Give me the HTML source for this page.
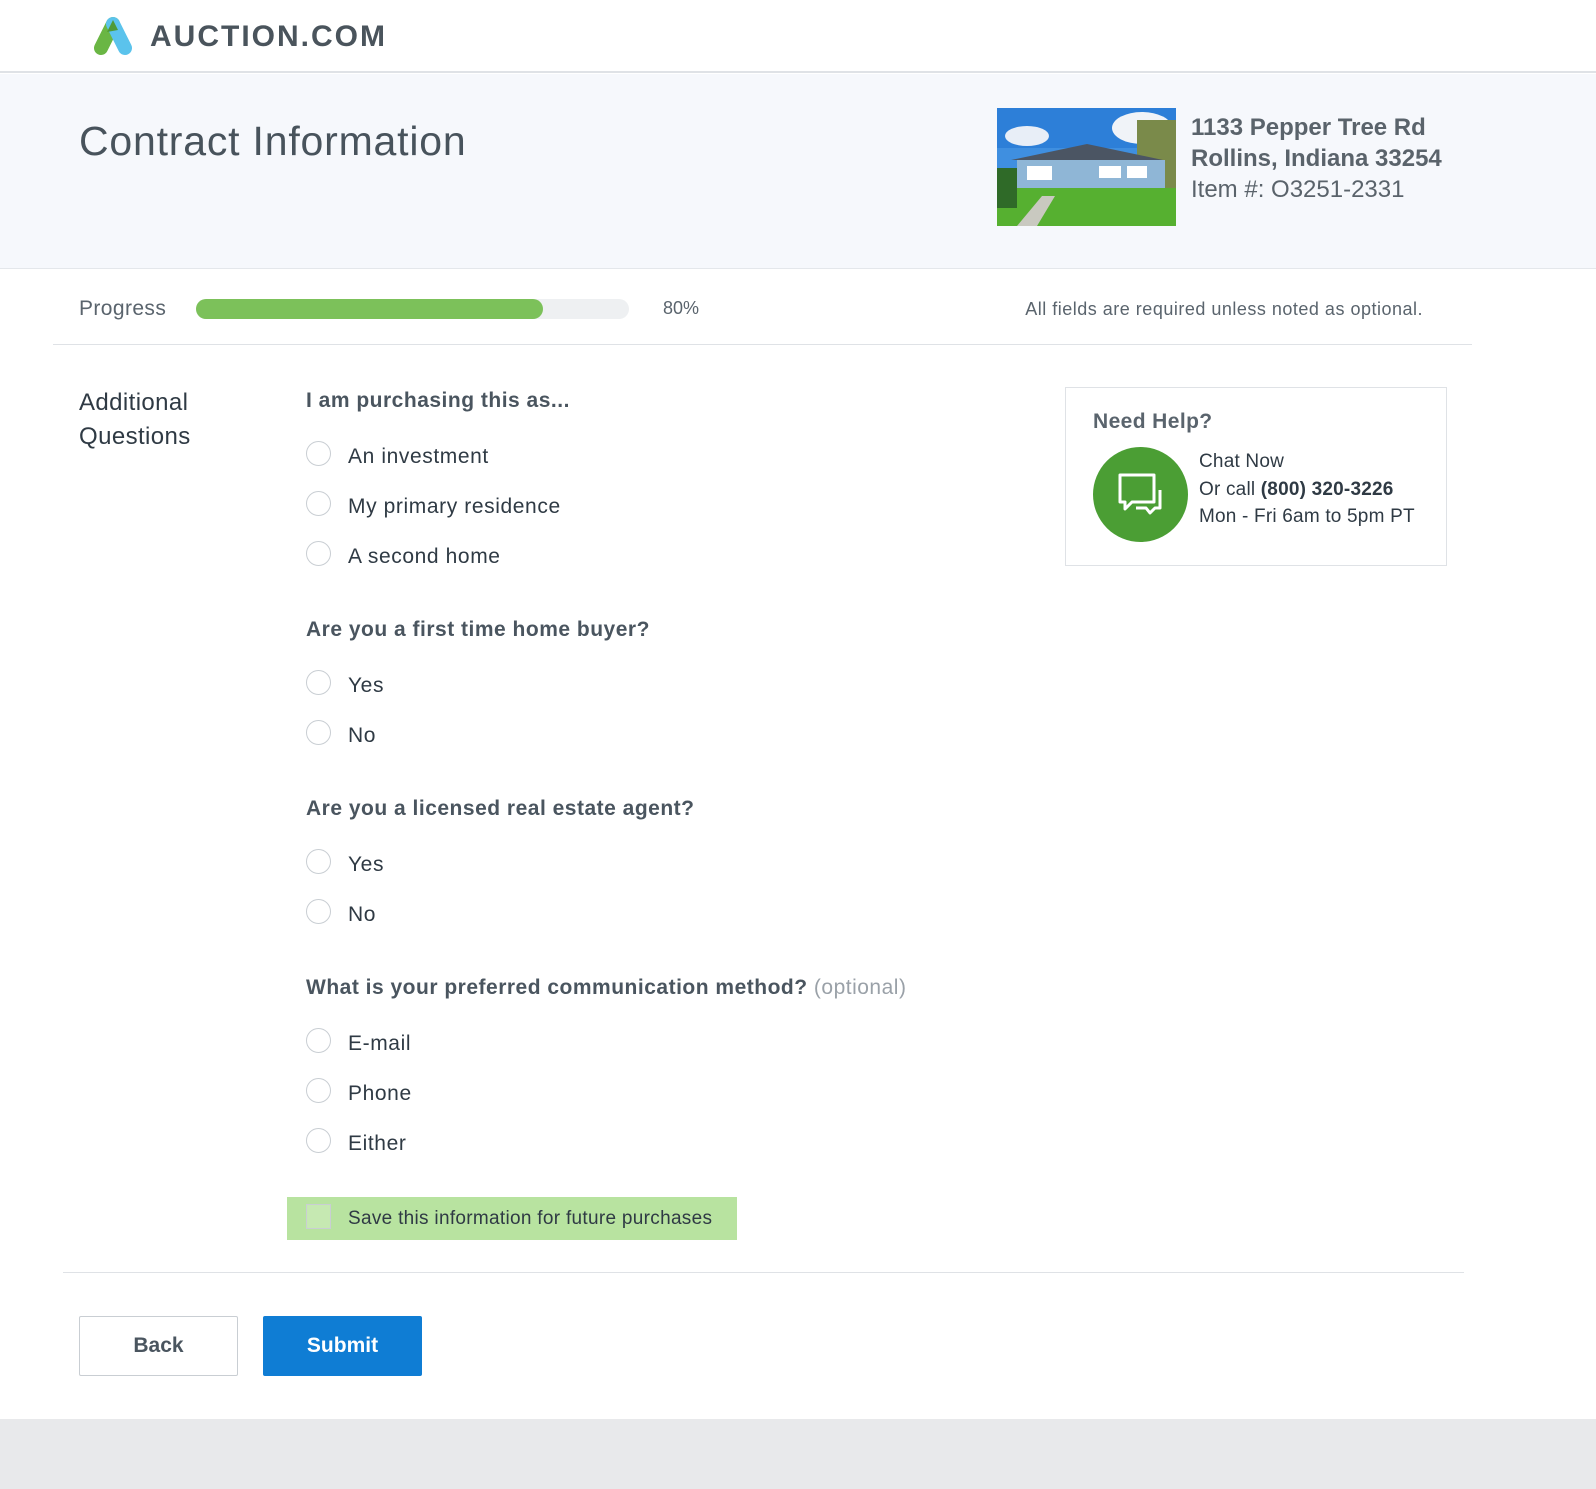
<!DOCTYPE html>
<html><head><meta charset="utf-8"><style>
*{margin:0;padding:0;box-sizing:border-box}
body{width:1596px;height:1489px;position:relative;font-family:"Liberation Sans",sans-serif;color:#3b4650;background:#fff;overflow:hidden}
.a{position:absolute;white-space:nowrap}
.r{position:absolute;width:25px;height:25px;border:1px solid #c9ced3;border-radius:50%;background:#fff;left:306px}
.o{position:absolute;left:348px;font-size:21px;color:#2f3a44;line-height:26px;letter-spacing:0.6px}
.q{position:absolute;left:306px;font-size:21px;font-weight:bold;color:#4a555f;line-height:26px;letter-spacing:0.5px}
</style></head><body>
<div class="a" style="left:0;top:0;width:1596px;height:73px;border-bottom:2px solid #dfe2e6"></div>
<svg class="a" style="left:88px;top:14px" width="50" height="44" viewBox="0 0 50 44">
<line x1="13" y1="34" x2="25" y2="10" stroke="#6ab644" stroke-width="14" stroke-linecap="round"/>
<line x1="25" y1="10" x2="37" y2="34" stroke="#5bc3ec" stroke-width="14" stroke-linecap="round"/>
<path d="M19 18 L25 6 L30 16 Z" fill="#4f9a36"/>
</svg>
<div class="a" style="left:150px;top:20px;font-size:30px;font-weight:bold;letter-spacing:2px;color:#4a545c;line-height:34px">AUCTION.COM</div>
<div class="a" style="left:0;top:74px;width:1596px;height:195px;background:#f6f8fc;border-bottom:1px solid #e4e7eb"></div>
<div class="a" style="left:79px;top:117px;font-size:41px;color:#48535c;line-height:48px;letter-spacing:0.8px">Contract Information</div>
<svg class="a" style="left:997px;top:108px" width="179" height="118" viewBox="0 0 179 118">
<rect width="179" height="118" fill="#3f8fe0"/><rect y="0" width="179" height="40" fill="#2d7fd8"/>
<ellipse cx="30" cy="28" rx="22" ry="10" fill="#e8eef7"/><ellipse cx="145" cy="20" rx="30" ry="16" fill="#f0f3f8"/>
<rect x="140" y="12" width="39" height="80" fill="#7a8a4a"/>
<polygon points="14,52 90,36 166,52" fill="#4b5563"/>
<rect x="20" y="52" width="148" height="40" fill="#8fb6d6"/>
<rect x="30" y="58" width="25" height="14" fill="#fff"/><rect x="102" y="58" width="22" height="12" fill="#fff"/><rect x="130" y="58" width="20" height="12" fill="#fff"/>
<rect x="0" y="80" width="179" height="38" fill="#56b030"/><polygon points="20,118 45,88 58,88 40,118" fill="#c9c9c0"/>
<rect x="0" y="60" width="20" height="40" fill="#2f6a28"/>
</svg>
<div class="a" style="left:1191px;top:112px;font-size:24px;line-height:31px;color:#5a636b"><b>1133 Pepper Tree Rd</b><br><b>Rollins, Indiana 33254</b><br>Item #: O3251-2331</div>
<div class="a" style="left:79px;top:297px;font-size:21px;color:#5a646d;letter-spacing:0.4px">Progress</div>
<div class="a" style="left:196px;top:299px;width:433px;height:20px;border-radius:10px;background:#eef0f2"></div>
<div class="a" style="left:196px;top:299px;width:347px;height:20px;border-radius:10px;background:#7cc15a"></div>
<div class="a" style="left:663px;top:298px;font-size:18px;color:#5a646d">80%</div>
<div class="a" style="right:173px;top:299px;font-size:18px;color:#5a646d;letter-spacing:0.5px">All fields are required unless noted as optional.</div>
<div class="a" style="left:53px;top:344px;width:1419px;height:1px;background:#dfe2e6"></div>
<div class="a" style="left:79px;top:386px;font-size:24px;line-height:34px;color:#2f3a44;letter-spacing:0.4px">Additional<br>Questions</div>
<div class="q" style="top:388px">I am purchasing this as...</div>
<div class="r" style="top:441px"></div><div class="o" style="top:444px">An investment</div>
<div class="r" style="top:491px"></div><div class="o" style="top:494px">My primary residence</div>
<div class="r" style="top:541px"></div><div class="o" style="top:544px">A second home</div>
<div class="q" style="top:617px">Are you a first time home buyer?</div>
<div class="r" style="top:670px"></div><div class="o" style="top:673px">Yes</div>
<div class="r" style="top:720px"></div><div class="o" style="top:723px">No</div>
<div class="q" style="top:796px">Are you a licensed real estate agent?</div>
<div class="r" style="top:849px"></div><div class="o" style="top:852px">Yes</div>
<div class="r" style="top:899px"></div><div class="o" style="top:902px">No</div>
<div class="q" style="top:975px">What is your preferred communication method? <span style="font-weight:normal;color:#9aa1a8">(optional)</span></div>
<div class="r" style="top:1028px"></div><div class="o" style="top:1031px">E-mail</div>
<div class="r" style="top:1078px"></div><div class="o" style="top:1081px">Phone</div>
<div class="r" style="top:1128px"></div><div class="o" style="top:1131px">Either</div>
<div class="a" style="left:287px;top:1197px;width:450px;height:43px;background:#b8e3a0"></div>
<div class="a" style="left:306px;top:1204px;width:25px;height:25px;border:1px solid #c9ced3;background:#c6e9b2"></div>
<div class="a" style="left:348px;top:1208px;font-size:19px;color:#2f3a44;letter-spacing:0.3px">Save this information for future purchases</div>
<div class="a" style="left:63px;top:1272px;width:1401px;height:1px;background:#dfe2e6"></div>
<div class="a" style="left:79px;top:1316px;width:159px;height:60px;border:1px solid #c9ced3;border-radius:2px;font-size:21px;font-weight:bold;color:#4a555f;text-align:center;line-height:58px">Back</div>
<div class="a" style="left:263px;top:1316px;width:159px;height:60px;background:#0f7dd4;border-radius:2px;font-size:21px;font-weight:bold;color:#fff;text-align:center;line-height:60px">Submit</div>
<div class="a" style="left:0;top:1419px;width:1596px;height:70px;background:#e8e9eb"></div>
<div class="a" style="left:1065px;top:387px;width:382px;height:179px;border:1px solid #dfe2e6;background:#fff"></div>
<div class="a" style="left:1093px;top:410px;font-size:21px;font-weight:bold;color:#5a646d;letter-spacing:0.4px">Need Help?</div>
<div class="a" style="left:1093px;top:447px;width:95px;height:95px;border-radius:50%;background:#4b9e34"></div>
<svg class="a" style="left:1117px;top:472px" width="48" height="46" viewBox="0 0 48 46">
<path d="M3 3 H37 V30 H15 L8 37 V30 H3 Z" fill="none" stroke="#fff" stroke-width="3" stroke-linejoin="round"/>
<path d="M43 18 V36 H38 L33 41 L29 36 H19" fill="none" stroke="#fff" stroke-width="3" stroke-linejoin="round"/>
</svg>
<div class="a" style="left:1199px;top:448px;font-size:19px;line-height:27.5px;color:#2f3a44;letter-spacing:0.2px">Chat Now<br>Or call <b>(800) 320-3226</b><br>Mon - Fri 6am to 5pm PT</div>
</body></html>
